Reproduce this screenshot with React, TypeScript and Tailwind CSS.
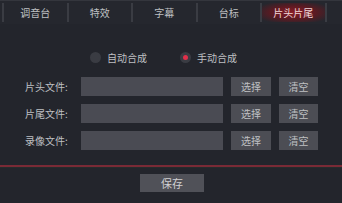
import React from 'react';

const tabs = ['调音台', '特效', '字幕', '台标', '片头片尾'];
const rows = ['片头文件:', '片尾文件:', '录像文件:'];

const font = { fontFamily: '"Noto Sans CJK SC", "Noto Sans", sans-serif' };

export default function App(): JSX.Element {
  const [active, setActive] = React.useState(4);
  const [mode, setMode] = React.useState<'auto' | 'manual'>('manual');

  return (
    <div
      className="flex h-[203px] w-[342px] flex-col bg-[#23252c] text-[10px] text-[#bfc0c3]"
      style={font}
    >
      <div className="flex h-[24px] border-t border-[#34363d] bg-[#25272e] pl-[2px]">
        {tabs.map((tab, index) => (
          <button
            key={tab}
            type="button"
            onClick={(): void => setActive(index)}
            className={`relative my-[2px] flex w-[64.5px] items-center justify-center border-l-2 border-[#3a3c43] leading-none ${
              index === active
                ? 'bg-[radial-gradient(ellipse_at_center,#8a1c26_0%,#5a1a22_50%,#25272e_90%)] text-[#f0d6d8]'
                : ''
            }`}
          >
            {tab}
          </button>
        ))}
        <div className="my-[2px] border-l-2 border-[#3a3c43]" />
      </div>

      <div className="mt-[26px] flex h-[14px] items-center pl-[90px]">
        <button
          type="button"
          className="flex items-center gap-[6px]"
          onClick={(): void => setMode('auto')}
        >
          <span className="flex h-[11px] w-[11px] items-center justify-center rounded-full bg-[#3a3c43]">
            {mode === 'auto' && (
              <span className="h-[5px] w-[5px] rounded-full bg-[#e0304a]" />
            )}
          </span>
          自动合成
        </button>
        <button
          type="button"
          className="ml-[33px] flex items-center gap-[6px]"
          onClick={(): void => setMode('manual')}
        >
          <span className="flex h-[11px] w-[11px] items-center justify-center rounded-full bg-[#3a3c43]">
            {mode === 'manual' && (
              <span className="h-[5px] w-[5px] rounded-full bg-[#e0304a]" />
            )}
          </span>
          手动合成
        </button>
      </div>

      <div className="mt-[13px] flex flex-col gap-[8px]">
        {rows.map((label) => (
          <div key={label} className="flex h-[19px] items-center">
            <span className="w-[81px] pl-[25px]">{label}</span>
            <div className="h-full w-[142px] bg-[#4a4b53]" />
            <button
              type="button"
              className="ml-[8px] h-full w-[40px] bg-[#4c4d54]"
            >
              选择
            </button>
            <button
              type="button"
              className="ml-[8px] h-full w-[39px] bg-[#4c4d54]"
            >
              清空
            </button>
          </div>
        ))}
      </div>

      <div className="mt-[15px] h-[2px] bg-[#7a2a36]" />
      <div className="h-px bg-[#262c2c]" />

      <div className="mt-[6px] flex justify-center">
        <button
          type="button"
          className="ml-[2px] h-[18px] w-[64px] bg-[#505158] text-[11px] text-[#d0d0d2]"
        >
          保存
        </button>
      </div>
    </div>
  );
}
